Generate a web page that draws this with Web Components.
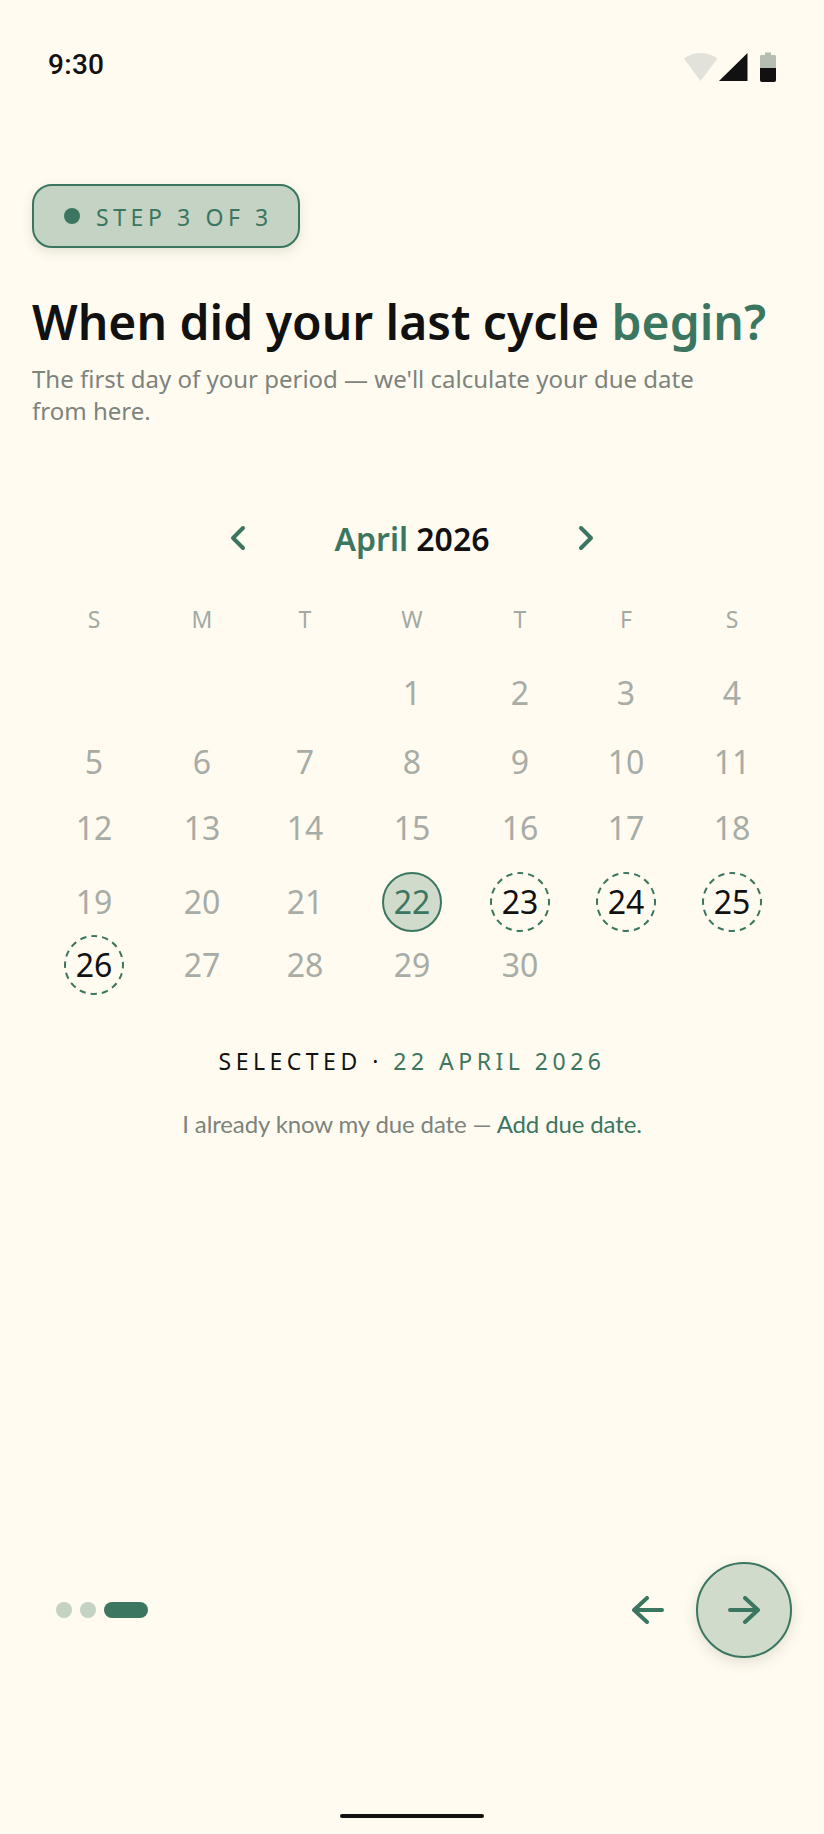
<!DOCTYPE html>
<html lang="en">
<head>
<meta charset="utf-8">
<title>Step 3 of 3</title>
<style>
  html, body { margin: 0; padding: 0; background: #fffbf0; }
  body { font-family: "Noto Sans", sans-serif; color: #111; }
</style>
</head>
<body>
<onboard-screen>
  <status-bar slot="top"></status-bar>
  <step-pill>STEP 3 OF 3</step-pill>
  <page-title>
    <span slot="title">When did your last cycle <em style="font-style:normal;color:#3b7660">begin?</em></span>
    The first day of your period — we'll calculate your due date from here.
  </page-title>
  <month-calendar></month-calendar>
  <selected-date>22 APRIL 2026</selected-date>
  <due-link></due-link>
  <pager-bar slot="bottom"></pager-bar>
  <home-bar slot="bottom"></home-bar>
</onboard-screen>

<script>
const GREEN = "#3b7660";

class OnboardScreen extends HTMLElement {
  constructor() {
    super();
    this.attachShadow({ mode: "open" });
    this.shadowRoot.innerHTML = `
      <style>
        :host { display: flex; flex-direction: column; width: 824px; height: 1834px; box-sizing: border-box; overflow: hidden; }
        main { flex: 1; display: flex; flex-direction: column; align-items: flex-start; padding: 0 32px; }
      </style>
      <slot name="top"></slot>
      <main><slot></slot></main>
      <slot name="bottom"></slot>
    `;
  }
}

class StatusBar extends HTMLElement {
  constructor() {
    super();
    this.attachShadow({ mode: "open" });
    this.shadowRoot.innerHTML = `
      <style>
        :host { display: flex; justify-content: space-between; align-items: center; height: 128px; padding: 0 48px; box-sizing: border-box; }
        .time { font: 500 28px Roboto, sans-serif; letter-spacing: .3px; color: #111; }
        svg { display: block; }
      </style>
      <span class="time">9:30</span>
      <svg width="92" height="36" viewBox="0 0 92 36">
        <path d="M0 12.500C4.500 9 10 7 16.500 7S29 9 33.500 12.500L16.500 35z" fill="#e2e2da"/>
        <path d="M35 35 63.500 7V35z" fill="#111"/>
        <path d="M76 10.500c0-1 .600-1.500 1.500-1.500H81V6.500h6V9h3.500c.900 0 1.500.500 1.500 1.500V22H76z" fill="#b6bdb2"/>
        <path d="M76 22H92v12c0 1.300-.700 2-2 2H78c-1.300 0-2-.700-2-2z" fill="#111"/>
      </svg>
    `;
  }
}

class StepPill extends HTMLElement {
  constructor() {
    super();
    this.attachShadow({ mode: "open" });
    this.shadowRoot.innerHTML = `
      <style>
        :host { display: inline-flex; align-items: center; gap: 16px; box-sizing: border-box; height: 64px; margin-top: 56px; padding: 1px 25px 0 30px; background: #c4d3c4; border: 2px solid ${GREEN}; border-radius: 20px; box-shadow: 0 4px 12px rgba(60, 70, 50, .14); font-size: 23px; letter-spacing: 4.6px; color: ${GREEN}; }
        i { width: 16px; height: 16px; margin-top: -1px; border-radius: 50%; background: ${GREEN}; }
      </style>
      <i></i><slot></slot>
    `;
  }
}

class PageTitle extends HTMLElement {
  constructor() {
    super();
    this.attachShadow({ mode: "open" });
    this.shadowRoot.innerHTML = `
      <style>
        :host { display: block; width: 760px; margin-top: 42px; }
        h1 { margin: 0; font-size: 48px; line-height: 64px; font-weight: 600; color: #111; white-space: nowrap; }
        p { margin: 9px 0 0; width: 680px; font-size: 24px; line-height: 32px; color: #7d837d; }
      </style>
      <h1><slot name="title"></slot></h1>
      <p><slot></slot></p>
    `;
  }
}

const chevron = (d) => `<svg width="32" height="32" viewBox="0 0 32 32" fill="none" stroke="${GREEN}" stroke-width="4" stroke-linecap="round" stroke-linejoin="round"><path d="${d}"/></svg>`;

class MonthCalendar extends HTMLElement {
  constructor() {
    super();
    this.attachShadow({ mode: "open" });
    const heads = ["S", "M", "T", "W", "T", "F", "S"].map((d) => `<span class="head">${d}</span>`).join("");
    let cells = "<span></span><span></span><span></span>";
    for (let n = 1; n <= 30; n++) {
      const kind = n === 22 ? "sel" : n > 22 && n < 27 ? "due" : "";
      const ring = kind === "due" ? `<svg viewBox="0 0 60 60"><circle cx="30" cy="30" r="29" fill="none" stroke="${GREEN}" stroke-width="2" stroke-dasharray="6.400 5" stroke-dashoffset="3.200" transform="rotate(-90 30 30)"/></svg>` : "";
      cells += `<span class="day ${kind}">${ring}<b>${n}</b></span>`;
    }
    this.shadowRoot.innerHTML = `
      <style>
        :host { display: block; width: 824px; margin: 87px 0 0 -32px; }
        .nav { display: grid; grid-template-columns: 32px 1fr 32px; align-items: center; width: 378px; margin: 0 auto; height: 48px; }
        .nav svg { display: block; }
        .label { text-align: center; font-size: 32px; font-weight: 600; color: #111; }
        .label em { font-style: normal; color: ${GREEN}; }
        .grid { display: grid; margin: 32px 0 0 40px; grid-template-columns: 108px 108px 98px 116px 100px 112px 100px; grid-template-rows: 69px 69px 66px 74px 63px 60px; justify-items: center; align-items: start; }
        .head { font-size: 23px; line-height: 50px; color: #a3a9a4; }
        .day { position: relative; display: flex; align-items: center; justify-content: center; box-sizing: border-box; width: 60px; height: 60px; border-radius: 50%; font-size: 32px; color: #a8aca6; }
        .day b { font-weight: 400; margin-top: -2px; }
        .day svg { position: absolute; inset: 0; width: 60px; height: 60px; }
        .sel { background: #d0dbcc; border: 2px solid ${GREEN}; color: ${GREEN}; }
        .due { color: #111; }
      </style>
      <div class="nav">
        ${chevron("M20 6 10 16l10 10")}
        <div class="label"><em>April</em> 2026</div>
        ${chevron("M12 6l10 10-10 10")}
      </div>
      <div class="grid">${heads}${cells}</div>
    `;
  }
}

class SelectedDate extends HTMLElement {
  constructor() {
    super();
    this.attachShadow({ mode: "open" });
    this.shadowRoot.innerHTML = `
      <style>
        :host { display: block; width: 760px; margin-top: 50px; text-align: center; font-size: 23px; letter-spacing: 4.5px; color: #111; }
        span { color: ${GREEN}; }
      </style>
      SELECTED · <span><slot></slot></span>
    `;
  }
}

class DueLink extends HTMLElement {
  constructor() {
    super();
    this.attachShadow({ mode: "open" });
    this.shadowRoot.innerHTML = `
      <style>
        :host { display: block; width: 760px; margin-top: 32px; text-align: center; font: 24px Lato, sans-serif; letter-spacing: -.13px; color: #7d837d; }
        a { color: ${GREEN}; }
      </style>
      I already know my due date — <a>Add due date.</a>
    `;
  }
}

class PagerBar extends HTMLElement {
  constructor() {
    super();
    this.attachShadow({ mode: "open" });
    this.shadowRoot.innerHTML = `
      <style>
        :host { display: flex; align-items: center; height: 96px; margin-bottom: 156px; padding: 0 32px 0 56px; }
        .dots { display: flex; gap: 8px; flex: 1; }
        .dots i { width: 16px; height: 16px; border-radius: 8px; background: #c4d3c4; }
        .dots i.on { width: 44px; background: ${GREEN}; }
        svg { display: block; }
        .back { margin-right: 32px; }
        .next { display: flex; align-items: center; justify-content: center; box-sizing: border-box; width: 96px; height: 96px; border-radius: 50%; background: #d0dbcc; border: 2px solid ${GREEN}; box-shadow: 0 4px 14px rgba(60, 70, 50, .16); }
      </style>
      <div class="dots"><i></i><i></i><i class="on"></i></div>
      <svg class="back" width="32" height="28" viewBox="0 0 32 28" fill="none" stroke="${GREEN}" stroke-width="4" stroke-linecap="round" stroke-linejoin="round"><path d="M30 14H2M15 2 2 14l13 12"/></svg>
      <div class="next">
        <svg width="32" height="28" viewBox="0 0 32 28" fill="none" stroke="${GREEN}" stroke-width="4" stroke-linecap="round" stroke-linejoin="round"><path d="M2 14h28M17 2l13 12-13 12"/></svg>
      </div>
    `;
  }
}

class HomeBar extends HTMLElement {
  constructor() {
    super();
    this.attachShadow({ mode: "open" });
    this.shadowRoot.innerHTML = `
      <style>
        :host { display: flex; justify-content: center; height: 20px; }
        i { width: 144px; height: 4px; border-radius: 2px; background: #111; }
      </style>
      <i></i>
    `;
  }
}

customElements.define("onboard-screen", OnboardScreen);
customElements.define("status-bar", StatusBar);
customElements.define("step-pill", StepPill);
customElements.define("page-title", PageTitle);
customElements.define("month-calendar", MonthCalendar);
customElements.define("selected-date", SelectedDate);
customElements.define("due-link", DueLink);
customElements.define("pager-bar", PagerBar);
customElements.define("home-bar", HomeBar);
</script>
</body>
</html>
